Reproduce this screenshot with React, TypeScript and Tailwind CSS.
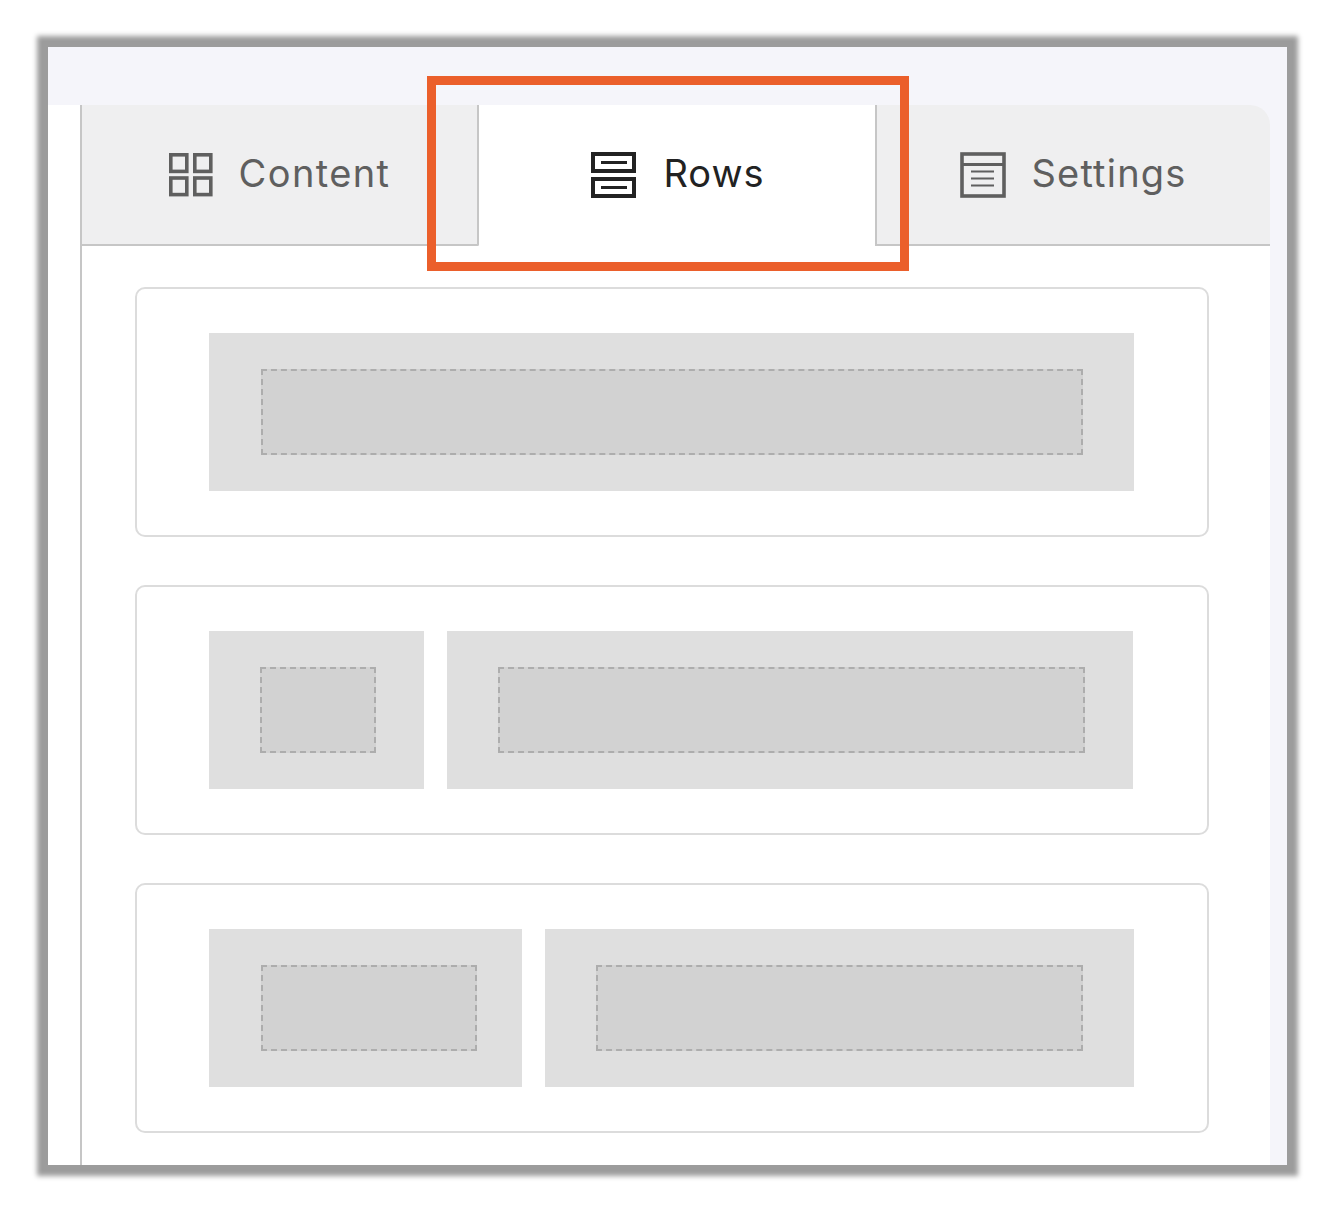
import React from 'react';

const FONT = "font-['Inter','Liberation_Sans',sans-serif]";

function ContentIcon() {
  return (
    <svg width="44" height="44" viewBox="0 0 44 44" fill="none" stroke="#5f5f5f" strokeWidth="3.6">
      <rect x="1.8" y="1.8" width="16" height="16.6" />
      <rect x="25.8" y="1.8" width="16" height="16.6" />
      <rect x="1.8" y="25" width="16" height="16.6" />
      <rect x="25.8" y="25" width="16" height="16.6" />
    </svg>
  );
}

function RowsIcon() {
  return (
    <svg width="46" height="46" viewBox="0 0 46 46" fill="none" stroke="#222222">
      <rect x="2" y="2" width="41" height="17" strokeWidth="4" />
      <rect x="2" y="27" width="41" height="17" strokeWidth="4" />
      <path d="M10 10.5H36M10 35.5H36" strokeWidth="3" />
    </svg>
  );
}

function SettingsIcon() {
  return (
    <svg width="46" height="46" viewBox="0 0 46 46" fill="none" stroke="#5f5f5f">
      <rect x="2" y="2" width="42" height="42" strokeWidth="3.6" />
      <path d="M2 12.5H44" strokeWidth="3" />
      <path d="M11 19.5H34M11 26.5H34M11 33.5H34" strokeWidth="2.2" />
    </svg>
  );
}

// one gray column with the dashed drop area inside
function Column({ className }: { className: string }) {
  return (
    <div className={`flex h-[158px] bg-[#dfdfdf] pt-[36px] pb-[36px] ${className}`}>
      <div className="flex-1 border-2 border-dashed border-[#adadad] bg-[#d2d2d2]" />
    </div>
  );
}

export default function App() {
  return (
    <div className={`relative h-[1212px] w-[1340px] overflow-hidden bg-white pt-[47px] pl-[48px] ${FONT}`}>
      <div className="h-[1118px] w-[1239px] bg-[#f5f5fa] shadow-[0_0_5px_11px_#9c9c9c]">
        <div className="h-[58px]" />

        <div className="flex h-[1060px]">
          <div className="w-[32px] bg-white" />

          <div className="w-[1190px] border-l-2 border-[#c6c6c6]">
            {/* Tabs */}
            <div className="flex h-[141px]">
              <div className="flex w-[397px] items-center justify-center gap-[26px] rounded-br-[2px] border-r-2 border-b-2 border-[#c6c6c6] bg-[#efeff0] text-[38px] text-[#5f5f5f]">
                <ContentIcon />
                <span className="pb-[2px] tracking-[1.4px]">Content</span>
              </div>
              <div className="flex w-[396px] items-center justify-center gap-[26px] border-b-2 border-white bg-white pl-[2px] text-[38px] text-[#222222]">
                <RowsIcon />
                <span className="pb-[2px] tracking-[1px]">Rows</span>
              </div>
              <div className="flex flex-1 items-center justify-center gap-[25px] rounded-tr-[20px] border-b-2 border-l-2 border-[#c6c6c6] bg-[#efeff0] text-[38px] text-[#5f5f5f]">
                <SettingsIcon />
                <span className="pb-[2px] tracking-[1.2px]">Settings</span>
              </div>
            </div>

            {/* Row layouts */}
            <div className="flex h-[919px] flex-col gap-[48px] bg-white pt-[41px] pr-[61px] pl-[53px]">
              <div className="flex h-[250px] gap-[23px] rounded-[10px] border-2 border-[#dcdcdc] px-[72px] pt-[44px]">
                <Column className="w-[925px] pr-[51px] pl-[52px]" />
              </div>
              <div className="flex h-[250px] gap-[23px] rounded-[10px] border-2 border-[#dcdcdc] px-[72px] pt-[44px]">
                <Column className="w-[215px] pr-[48px] pl-[51px]" />
                <Column className="w-[686px] pr-[48px] pl-[51px]" />
              </div>
              <div className="flex h-[250px] gap-[23px] rounded-[10px] border-2 border-[#dcdcdc] px-[72px] pt-[44px]">
                <Column className="w-[313px] pr-[45px] pl-[52px]" />
                <Column className="w-[589px] pr-[51px] pl-[51px]" />
              </div>
            </div>
          </div>
        </div>
      </div>

      {/* Orange highlight over the Rows tab */}
      <div className="absolute top-[76px] left-[427px] h-[195px] w-[482px] border-[9px] border-[#eb5f2b]" />
    </div>
  );
}
